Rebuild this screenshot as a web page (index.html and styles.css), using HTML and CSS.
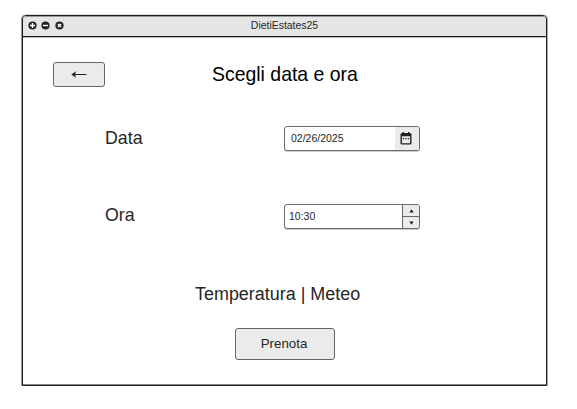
FILE: index.html
```html
<!DOCTYPE html>
<html lang="it">
<head>
<meta charset="utf-8">
<title>DietiEstates25</title>
<link rel="stylesheet" href="styles.css">
</head>
<body>
<main class="window">
  <header class="titlebar">
    <div class="controls">
      <svg class="control" viewBox="0 0 9 9"><circle cx="4.5" cy="4.5" r="4.1"/><path d="M4.5 2v5M2 4.5h5"/></svg>
      <svg class="control" viewBox="0 0 9 9"><circle cx="4.5" cy="4.5" r="4.1"/><path d="M1.9 4.5h5.2"/></svg>
      <svg class="control" viewBox="0 0 9 9"><circle cx="4.5" cy="4.5" r="4.1"/><path d="M2.9 2.9l3.2 3.2M6.1 2.9L2.9 6.1"/></svg>
    </div>
    <span class="app-name">DietiEstates25</span>
  </header>
  <section class="top">
    <button class="button back" aria-label="Indietro">
      <svg class="arrow" viewBox="0 0 16 8"><path class="shaft" d="M2 3.500h13.500"/><path class="head" d="M0.300 3.500L5 .3L4 3.500L5 6.700Z"/></svg>
    </button>
    <h1 class="heading">Scegli data e ora</h1>
  </section>
  <div class="row row-date">
    <span class="label label-date">Data</span>
    <div class="field">
      <span class="value date">02/26/2025</span>
      <span class="picker">
        <svg class="calendar" viewBox="0 0 12 13"><path d="M2 1h.5V0H4v1h4V0h1.500v1h.5a1.500 1.500 0 0 1 1.500 1.500v8.700a1.300 1.300 0 0 1-1.300 1.300H1.800a1.300 1.300 0 0 1-1.300-1.300V2.500A1.500 1.500 0 0 1 2 1zM1.900 4.300v6.900h8.200V4.300z"/><path d="M2.800 5.900h1.400v1.300H2.800zM5.300 5.900h1.400v1.300H5.300zM7.800 5.900h1.400v1.300H7.800z"/></svg>
      </span>
    </div>
  </div>
  <div class="row row-time">
    <span class="label">Ora</span>
    <div class="field">
      <span class="value">10:30</span>
      <span class="spinner">
        <span class="step"><svg class="tri" viewBox="0 0 5 4"><path d="M2.500 .3L4.700 3.600H.3z"/></svg></span>
        <span class="step"><svg class="tri" viewBox="0 0 5 4"><path d="M2.500 3.700L4.700 .4H.3z"/></svg></span>
      </span>
    </div>
  </div>
  <p class="info">Temperatura | Meteo</p>
  <button class="button submit">Prenota</button>
</main>
</body>
</html>
```
FILE: styles.css
```css
* { box-sizing: border-box; }
body {
  margin: 0;
  padding: 15px 0 0 22px;
  background: #fff;
  color: #262626;
  font-family: "Liberation Sans", Arial, sans-serif;
}
.window {
  width: 525px;
  height: 371px;
  border: 1px solid #1c1c1c;
  border-radius: 4px 4px 0 0;
  box-shadow: -1px 0 #999, 1px 0 #aaa, 0 -1px #ddd, inset 0 -1px #888;
}
.titlebar {
  display: grid;
  grid-template-columns: 1fr auto 1fr;
  height: 21px;
  border-bottom: 1px solid #1c1c1c;
  border-radius: 3px 3px 0 0;
  background: #e5e5e5;
  box-shadow: inset 0 1px #999, 0 1px #bbb;
}
.controls { display: flex; gap: 4.500px; padding: 5px 0 0 4.900px; }
.control { width: 9px; height: 9px; fill: #222; stroke: #fff; stroke-width: 1.400; }
.control circle { stroke: none; }
.app-name { font-size: 10.450px; line-height: 19px; }
.top {
  display: grid;
  grid-template-columns: 52px 1fr;
  height: 25px;
  margin: 25px 0 0 30px;
}
.button {
  padding: 0;
  border: 1px solid #666;
  border-radius: 3px;
  background: #ebebeb;
  color: #262626;
  font: 13.300px "Liberation Sans", Arial, sans-serif;
}
.back { display: flex; align-items: center; justify-content: center; }
.arrow { width: 16px; height: 8px; }
.shaft { stroke: #222; stroke-width: 1; }
.head { fill: #222; }
.heading {
  margin: 0 0 0 107px;
  color: #000;
  font-size: 19.450px;
  font-weight: normal;
  line-height: 25px;
}
.row {
  display: grid;
  grid-template-columns: 179px 136px;
  height: 25px;
  margin-left: 82px;
}
.row-date { margin-top: 39px; }
.row-time { margin-top: 53px; }
.label { font-size: 17.800px; line-height: 22px; }
.label-date { line-height: 24px; }
.field {
  display: flex;
  overflow: hidden;
  border: 1px solid #6c6c6c;
  border-radius: 3px;
  background: #fff;
  box-shadow: 0 1px #ccc;
}
.value { flex: 1; padding-left: 4px; font-size: 10.500px; line-height: 23px; }
.date { padding-left: 6px; }
.picker {
  display: flex;
  align-items: center;
  width: 24px;
  padding-left: 5px;
  background: #ebebeb;
}
.calendar { width: 12px; height: 13px; fill: #222; fill-rule: evenodd; }
.spinner {
  display: grid;
  grid-template-rows: 12px 11px;
  width: 17px;
  border-left: 1px solid #666;
  background: #ebebeb;
}
.step { display: flex; align-items: center; justify-content: center; }
.step:first-child { border-bottom: 1px solid #666; }
.tri { width: 5px; height: 4px; fill: #222; }
.info { margin: 54px 0 0 172px; font-size: 17.950px; line-height: 22px; }
.submit {
  display: block;
  width: 100px;
  height: 32px;
  margin: 23px 0 0 211.500px;
  padding: 0 1px 2px 0;
}
```
